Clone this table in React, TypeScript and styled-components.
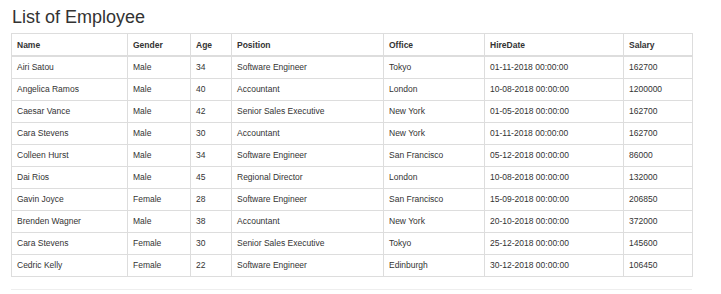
import React from 'react'
import styled, { createGlobalStyle } from 'styled-components'

const GlobalStyle = createGlobalStyle`
    body {
        margin: 0;
        background: #ffffff;
        font-family: 'Liberation Sans', Arial, sans-serif;
        color: #333333;
    }
`

const Page = styled.div`
    width: 681px;
    padding: 0 29px 0 11px;
`

const Title = styled.h2`
    margin: 0;
    padding-top: 5px;
    padding-left: 1px;
    height: 28px;
    font-size: 18px;
    font-weight: 400;
    line-height: 24px;
    color: #333333;
`

const Table = styled.table`
    width: 681px;
    border-collapse: collapse;
    table-layout: fixed;
    border: 1px solid #dddddd;
    font-size: 8.5px;
`

const HeadCell = styled.th<{ w: number }>`
    width: ${p => p.w}px;
    height: 22px;
    padding: 1px 5px 0;
    text-align: left;
    font-weight: 700;
    border: 1px solid #dddddd;
    border-bottom: 2px solid #dddddd;
    box-sizing: border-box;
`

const Cell = styled.td`
    height: 21px;
    padding: 0 5px;
    border: 1px solid #dddddd;
    white-space: nowrap;
`

const Rule = styled.hr`
    margin: 12px 0 0;
    border: 0;
    border-top: 1px solid #eeeeee;
`

type Employee = [string, string, number, string, string, string, number]

const columns: [string, number][] = [
    ['Name', 116],
    ['Gender', 63],
    ['Age', 41],
    ['Position', 152],
    ['Office', 101],
    ['HireDate', 139],
    ['Salary', 69]
]

const employees: Employee[] = [
    ['Airi Satou', 'Male', 34, 'Software Engineer', 'Tokyo', '01-11-2018 00:00:00', 162700],
    ['Angelica Ramos', 'Male', 40, 'Accountant', 'London', '10-08-2018 00:00:00', 1200000],
    ['Caesar Vance', 'Male', 42, 'Senior Sales Executive', 'New York', '01-05-2018 00:00:00', 162700],
    ['Cara Stevens', 'Male', 30, 'Accountant', 'New York', '01-11-2018 00:00:00', 162700],
    ['Colleen Hurst', 'Male', 34, 'Software Engineer', 'San Francisco', '05-12-2018 00:00:00', 86000],
    ['Dai Rios', 'Male', 45, 'Regional Director', 'London', '10-08-2018 00:00:00', 132000],
    ['Gavin Joyce', 'Female', 28, 'Software Engineer', 'San Francisco', '15-09-2018 00:00:00', 206850],
    ['Brenden Wagner', 'Male', 38, 'Accountant', 'New York', '20-10-2018 00:00:00', 372000],
    ['Cara Stevens', 'Female', 30, 'Senior Sales Executive', 'Tokyo', '25-12-2018 00:00:00', 145600],
    ['Cedric Kelly', 'Female', 22, 'Software Engineer', 'Edinburgh', '30-12-2018 00:00:00', 106450]
]

const App = () => (
    <Page>
        <GlobalStyle />
        <Title>List of Employee</Title>
        <Table>
            <thead>
                <tr>
                    {columns.map(([label, w]) => (
                        <HeadCell key={label} w={w}>
                            {label}
                        </HeadCell>
                    ))}
                </tr>
            </thead>
            <tbody>
                {employees.map((row, i) => (
                    <tr key={i}>
                        {row.map((value, j) => (
                            <Cell key={j}>{value}</Cell>
                        ))}
                    </tr>
                ))}
            </tbody>
        </Table>
        <Rule />
    </Page>
)

export default App
